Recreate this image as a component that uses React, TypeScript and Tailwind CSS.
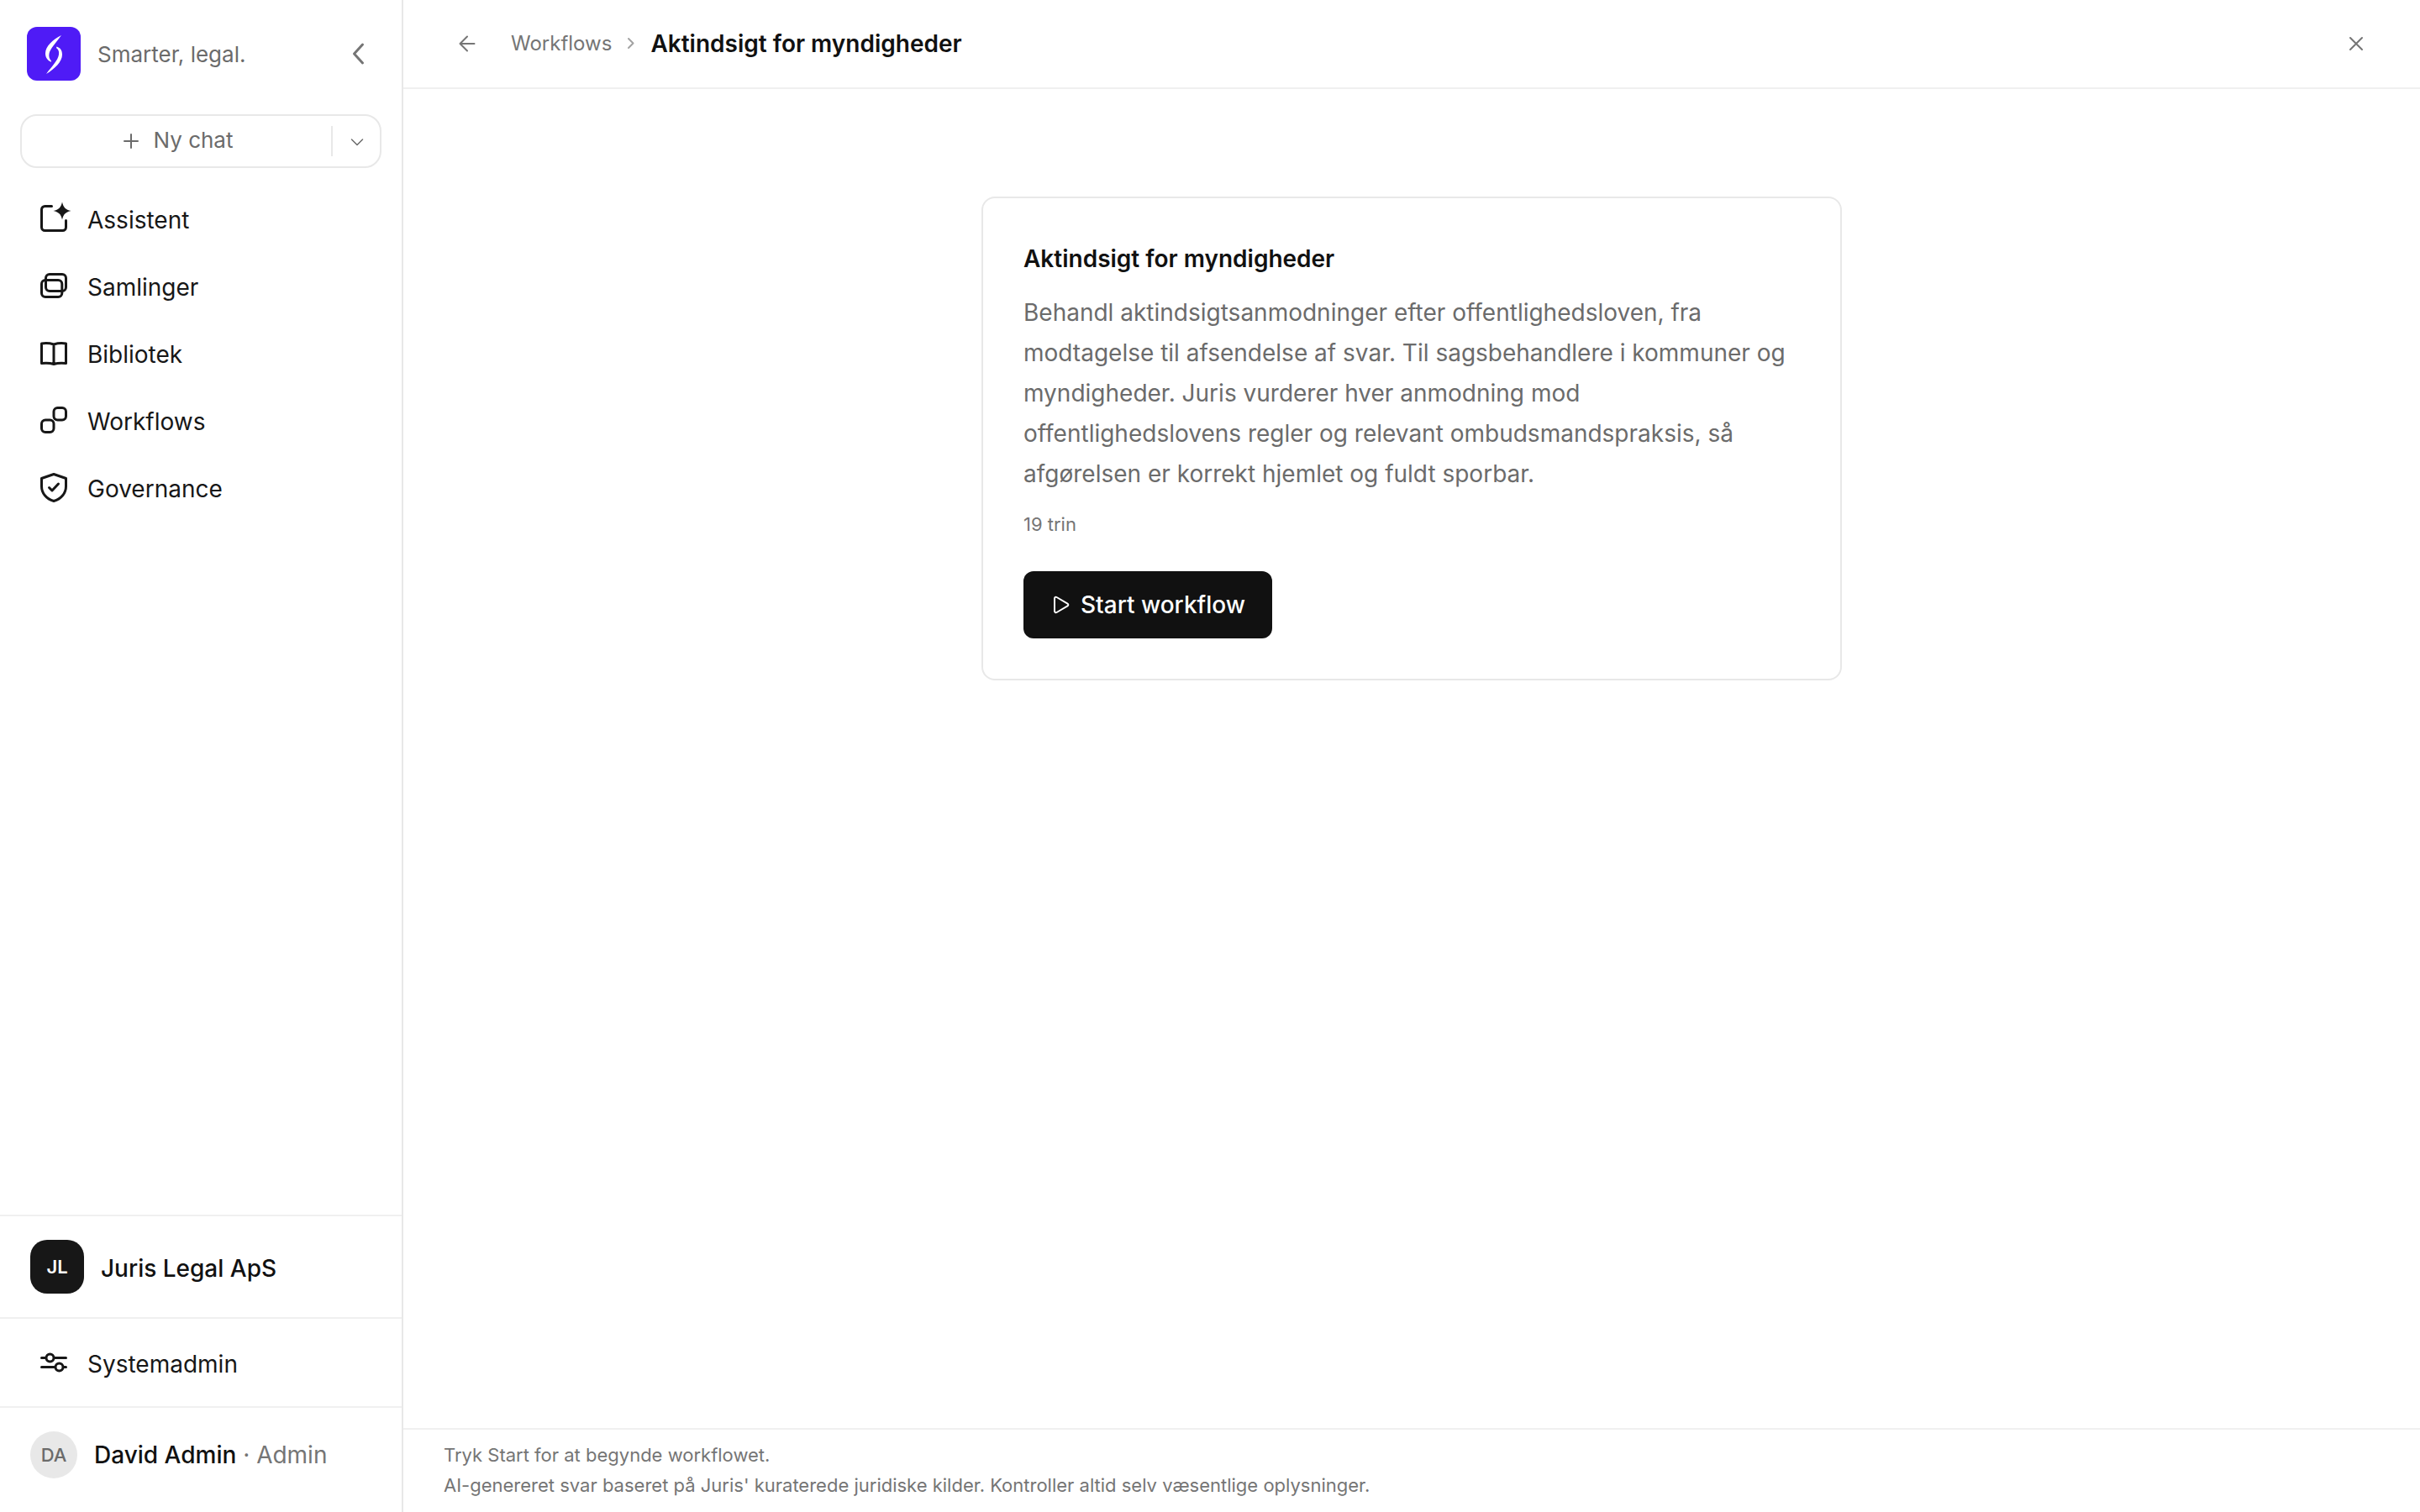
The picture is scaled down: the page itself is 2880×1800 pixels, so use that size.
import type { ReactNode } from "react";

type StrokeProps = {
  className?: string;
  box?: number;
  width?: number;
  children: ReactNode;
};

function Logo() {
  return (
    <svg viewBox="0 0 64 64" className="size-16 shrink-0" aria-hidden="true">
      <rect width="64" height="64" rx="12" fill="#4f1bf6" />
      <path d="M41 10C31 15 22 23 22 31.500C22 36.500 24.500 40 29 41.800L29 40.500C26.500 38 26 35 26.500 32C27.500 26 34 20 41 10Z" fill="#fff" />
      <path d="M35.500 23.500C40 25 42 28 42 33C42 41.500 33 50 23 56C30 46.500 37 40 38 33C38.500 29 37.500 27 35 25Z" fill="#fff" />
    </svg>
  );
}

function Stroke({ className = "mb-1 size-8", box = 32, width = 3, children }: StrokeProps) {
  return (
    <svg
      viewBox={`0 0 ${box} ${box}`}
      className={`shrink-0 overflow-visible ${className}`}
      fill="none"
      stroke="currentColor"
      strokeWidth={width}
      strokeLinecap="round"
      strokeLinejoin="round"
      aria-hidden="true"
    >
      {children}
    </svg>
  );
}

const navItems = [
  {
    label: "Assistent",
    icon: (
      <Stroke>
        <path d="M13.500 1.500H5.500a4 4 0 0 0-4 4v21a4 4 0 0 0 4 4h21a4 4 0 0 0 4-4V18.500" />
        <path d="M26-3.500C27.500 3 30 5.700 36.500 7C30 8.500 27.500 11 26 17.500C24.500 11 22 8.500 15.500 7C22 5.700 24.500 3 26-3.500Z" fill="currentColor" stroke="none" />
      </Stroke>
    ),
  },
  {
    label: "Samlinger",
    icon: (
      <Stroke>
        <rect x="6.500" y="2.500" width="24" height="20" rx="4.500" />
        <rect x="1.500" y="9.500" width="24.300" height="20" rx="4.500" />
      </Stroke>
    ),
  },
  {
    label: "Bibliotek",
    icon: (
      <Stroke>
        <path d="M16 6C11.500 4.600 6 4.300 1.500 5V28.500C6 28 11.500 28 16 29.500C20.500 28 26 28 30.500 28.500V5C26 4.300 20.500 4.600 16 6ZM16 6V29.500" />
      </Stroke>
    ),
  },
  {
    label: "Workflows",
    icon: (
      <Stroke>
        <rect x="16" y="1.500" width="14.500" height="14.500" rx="4.500" />
        <rect x="1.500" y="16" width="14.500" height="14.500" rx="4.500" />
      </Stroke>
    ),
  },
  {
    label: "Governance",
    icon: (
      <Stroke>
        <path d="M16 0.500L30.500 5.500V15C30.500 23 25 30 16 32.500C7 30 1.500 23 1.500 15V5.500Z" />
        <path d="M10.500 16.500L14 20L21.500 12" />
      </Stroke>
    ),
  },
];

function Sidebar() {
  return (
    <aside className="flex w-[480px] shrink-0 flex-col border-r-2 border-[#e8e8e8]">
      <div className="flex h-32 items-center pr-10 pl-8">
        <Logo />
        <span className="ml-5 flex-1 text-[26px] text-[#6b6b6b]">Smarter, legal.</span>
        <button type="button" aria-label="Skjul menu" className="text-[#757575]">
          <Stroke className="size-6" box={24}>
            <path d="M17.500 1L7.500 12L17.500 23" />
          </Stroke>
        </button>
      </div>

      <div className="mx-6 mt-2 flex h-16 items-center rounded-[20px] border-2 border-[#e8e8e8] text-[#6b6b6b]">
        <button type="button" className="flex flex-1 items-center justify-center gap-4 text-[26px]">
          <Stroke className="size-6" box={24} width={2}>
            <path d="M13 4V20M5 12H21" />
          </Stroke>
          <span className="pb-1">Ny chat</span>
        </button>
        <span className="h-9 w-0.5 bg-[#e8e8e8]" />
        <button type="button" aria-label="Flere muligheder" className="flex w-14 justify-center">
          <Stroke className="size-5" box={20} width={1.5}>
            <path d="M4.500 8L11 14.500L17.500 8" />
          </Stroke>
        </button>
      </div>

      <nav className="mt-6 flex flex-1 flex-col gap-1 px-6 text-[28px] text-[#171717]">
        {navItems.map((item) => (
          <a key={item.label} href="#" className="flex h-[76px] items-center gap-6 px-6">
            {item.icon}
            {item.label}
          </a>
        ))}
      </nav>

      <button type="button" className="flex items-center gap-5 border-t-2 border-[#f0f0f0] px-9 py-7 text-[28px] font-medium text-[#111]">
        <span className="flex size-16 items-center justify-center rounded-[20px] bg-[#171717] text-[22px] font-semibold text-white">JL</span>
        <span className="pt-1">Juris Legal ApS</span>
      </button>
      <a href="#" className="flex h-[106px] items-center gap-6 border-t-2 border-[#f0f0f0] px-12 pt-1 text-[28px] text-[#171717]">
        <Stroke>
          <path d="M1.500 10.500H6.500M16.500 10.500H30.500M1.500 21.500H17.500M27.500 21.500H30.500" />
          <circle cx="11.500" cy="10.500" r="4.500" />
          <circle cx="22.500" cy="21.500" r="4.500" />
        </Stroke>
        Systemadmin
      </a>
      <button type="button" className="flex items-center gap-5 border-t-2 border-[#f0f0f0] px-9 pt-7 pb-10 text-[28px]">
        <span className="flex size-14 items-center justify-center rounded-full bg-[#e8e8e8] text-[22px] font-medium text-[#6b6b6b]">DA</span>
        <span className="text-[#757575]">
          <span className="font-medium text-[#111]">David Admin</span> · Admin
        </span>
      </button>
    </aside>
  );
}

function Header() {
  return (
    <header className="flex h-[106px] items-center border-b-2 border-[#f0f0f0] px-12">
      <button type="button" aria-label="Tilbage" className="mr-6 p-4 text-[#757575]">
        <Stroke className="size-6" box={24} width={2}>
          <path d="M12 3.500L3.500 12L12 20.500M3.500 12H20.500" />
        </Stroke>
      </button>
      <nav aria-label="Sti" className="flex flex-1 items-center gap-[13px]">
        <a href="#" className="text-[24px] text-[#757575]">Workflows</a>
        <Stroke className="size-5 text-[#a3a3a3]" box={20} width={2}>
          <path d="M7 4L12.500 9.500L7 15" />
        </Stroke>
        <span className="text-[28px] font-semibold text-[#111]">Aktindsigt for myndigheder</span>
      </nav>
      <button type="button" aria-label="Luk" className="p-4 text-[#757575]">
        <Stroke className="size-6" box={24} width={2}>
          <path d="M5 5L19 19M19 5L5 19" />
        </Stroke>
      </button>
    </header>
  );
}

function WorkflowCard() {
  return (
    <section className="mx-auto w-full max-w-[1024px] rounded-2xl border-2 border-[#e8e8e8] p-12">
      <h1 className="text-[28px] leading-[48px] font-semibold text-[#111]">Aktindsigt for myndigheder</h1>
      <p className="mt-4 text-[28px] leading-[48px] text-[#6b6b6b]">
        Behandl aktindsigtsanmodninger efter offentlighedsloven, fra modtagelse til afsendelse af svar. Til
        sagsbehandlere i kommuner og myndigheder. Juris vurderer hver anmodning mod offentlighedslovens regler og
        relevant ombudsmandspraksis, så afgørelsen er korrekt hjemlet og fuldt sporbar.
      </p>
      <p className="mt-[18px] text-[22px] leading-[36px] text-[#757575]">19 trin</p>
      <button type="button" className="mt-[38px] flex h-20 items-center gap-3 rounded-xl bg-[#111] px-8 text-[28px] font-medium text-white">
        <Stroke className="size-6" box={24} width={2}>
          <path d="M5 4.500A1.700 1.700 0 0 1 7.600 3L20.500 10.600A1.600 1.600 0 0 1 20.500 13.400L7.600 21A1.700 1.700 0 0 1 5 19.500Z" />
        </Stroke>
        Start workflow
      </button>
    </section>
  );
}

export default function App() {
  return (
    <div className="flex min-h-screen bg-white font-['Inter',sans-serif]">
      <Sidebar />
      <div className="flex min-w-0 flex-1 flex-col">
        <Header />
        <main className="flex-1 px-12 pt-32">
          <WorkflowCard />
        </main>
        <footer className="border-t-2 border-[#f0f0f0] px-12 pt-3 pb-[14px] text-[22px] leading-[36px] text-[#757575]">
          <p>Tryk Start for at begynde workflowet.</p>
          <p>AI-genereret svar baseret på Juris' kuraterede juridiske kilder. Kontroller altid selv væsentlige oplysninger.</p>
        </footer>
      </div>
    </div>
  );
}
